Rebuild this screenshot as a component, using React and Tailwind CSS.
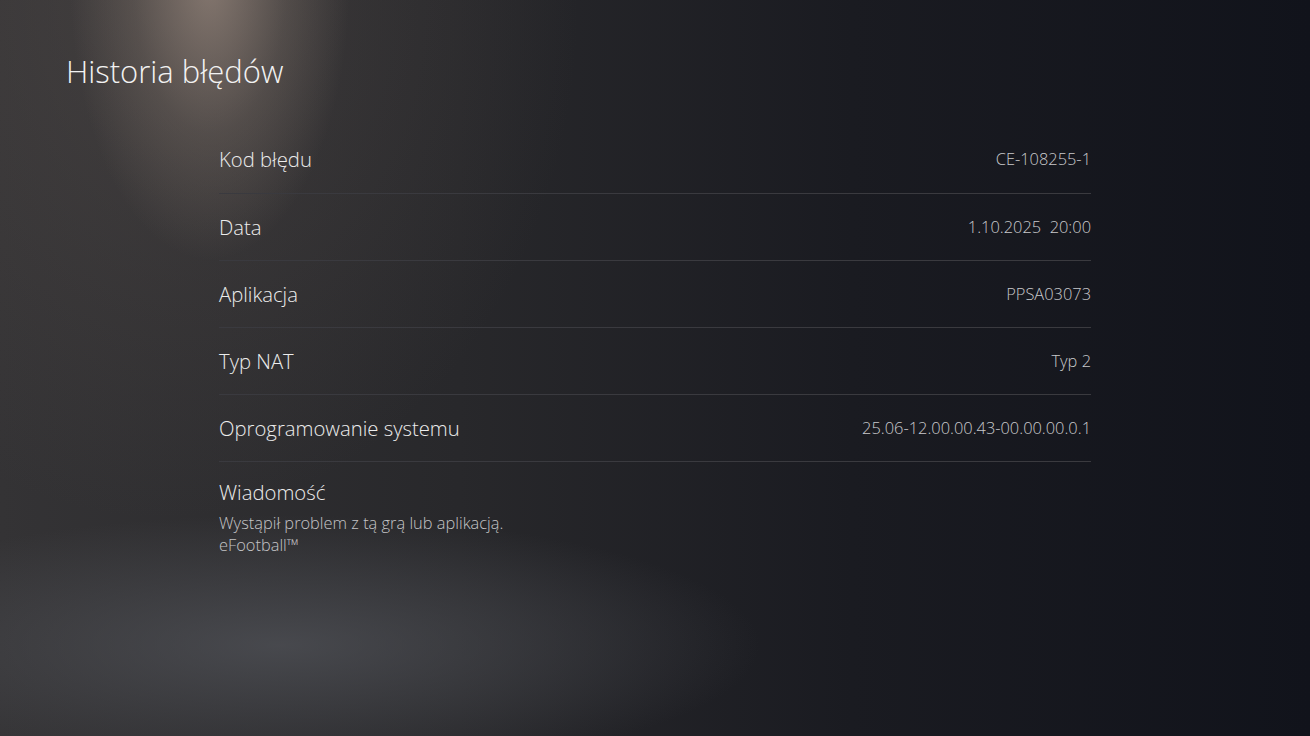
import React from "react";

const rows = [
  { label: "Kod błędu", value: "CE-108255-1" },
  { label: "Data", value: "1.10.2025\u00a0\u00a020:00" },
  { label: "Aplikacja", value: "PPSA03073" },
  { label: "Typ NAT", value: "Typ 2" },
  { label: "Oprogramowanie systemu", value: "25.06-12.00.00.43-00.00.00.0.1" },
];

export default function App() {
  return (
    <div
      className="w-[1310px] h-[736px] overflow-hidden text-white font-['Open_Sans',sans-serif] bg-[image:radial-gradient(ellipse_140px_280px_at_210px_-20px,rgba(150,134,124,0.8),rgba(140,126,116,0.3)_55%,transparent),radial-gradient(ellipse_420px_520px_at_160px_0px,rgba(95,86,82,0.35),transparent),radial-gradient(ellipse_480px_130px_at_280px_645px,rgba(86,88,94,0.65),transparent),linear-gradient(to_right,#343335_0%,#28282b_35%,#1a1b21_65%,#11131b_100%)]"
    >
      <h1 className="pl-[66px] pt-[50px] text-[31px] leading-[42px] font-light text-[#f2f2f2]">
        Historia błędów
      </h1>

      <div className="ml-[219px] w-[872px] mt-[34px]">
        {rows.map((r, i) => (
          <div
            key={r.label}
            className={
              i === 0
                ? "h-[68px] flex items-center justify-between border-b border-[#3a3a3f]"
                : "h-[67px] flex items-center justify-between border-b border-[#3a3a3f]"
            }
          >
            <span className="text-[20.3px] font-light text-[#ececec]">{r.label}</span>
            <span className="text-[16.4px] font-light text-[#c9c9cc]">{r.value}</span>
          </div>
        ))}

        <div className="pt-[16px]">
          <div className="text-[20.3px] leading-[28px] font-light text-[#ececec]">Wiadomość</div>
          <div className="mt-[6px] text-[16.4px] leading-[22px] font-light text-[#c4c4c6]">
            <div>Wystąpił problem z tą grą lub aplikacją.</div>
            <div>eFootball™</div>
          </div>
        </div>
      </div>
    </div>
  );
}
